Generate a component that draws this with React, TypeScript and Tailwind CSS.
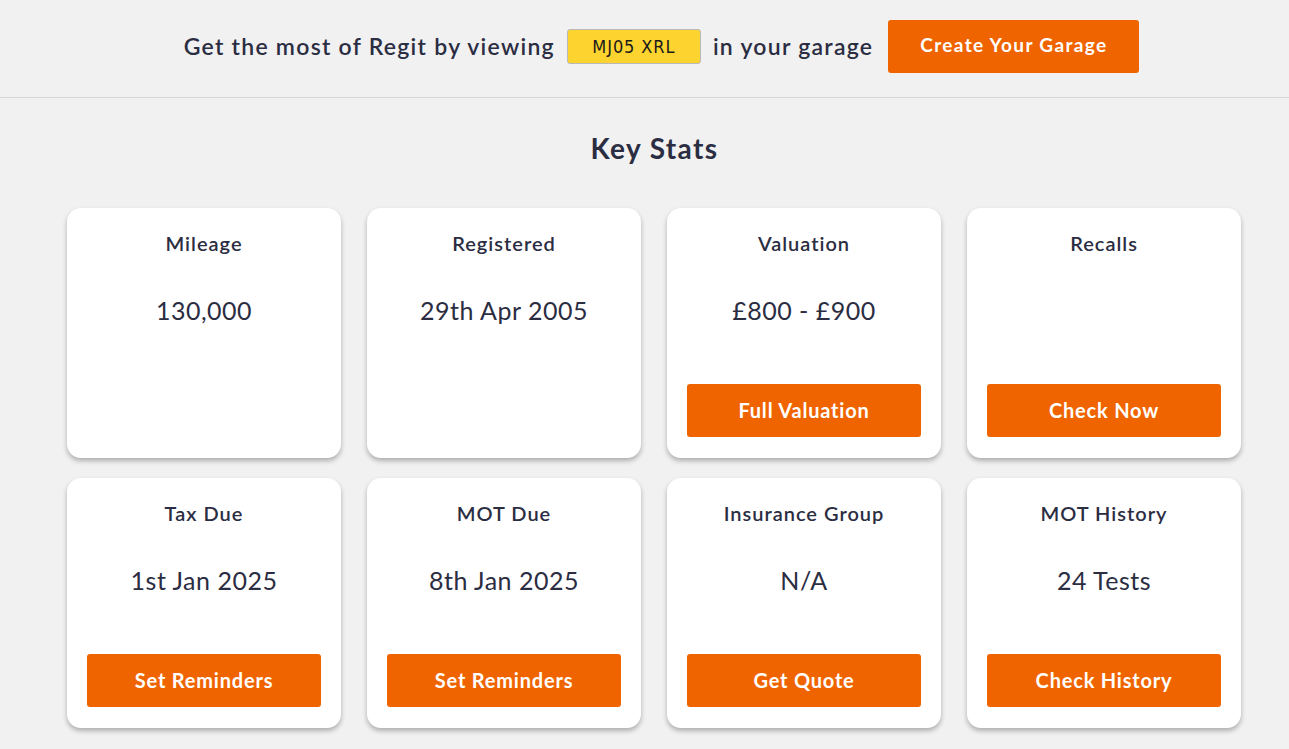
import React from 'react';

type Stat = {
  title: string;
  value?: string;
  action?: string;
};

const stats: Stat[] = [
  { title: 'Mileage', value: '130,000' },
  { title: 'Registered', value: '29th Apr 2005' },
  { title: 'Valuation', value: '£800 - £900', action: 'Full Valuation' },
  { title: 'Recalls', action: 'Check Now' },
  { title: 'Tax Due', value: '1st Jan 2025', action: 'Set Reminders' },
  { title: 'MOT Due', value: '8th Jan 2025', action: 'Set Reminders' },
  { title: 'Insurance Group', value: 'N/A', action: 'Get Quote' },
  { title: 'MOT History', value: '24 Tests', action: 'Check History' },
];

function StatCard({ stat }: { stat: Stat }) {
  return (
    <div className="h-[250px] bg-white rounded-[14px] shadow-[0_3px_5px_rgba(0,0,0,0.28)] flex flex-col items-center px-5 pt-[23px] pb-[21px]">
      <h3 className="text-[20px] leading-[24px] font-semibold tracking-[0.05em] text-[#2b2d42]">{stat.title}</h3>
      <p className="mt-[39px] h-[32px] text-[25px] leading-[32px] tracking-[0.02em] text-[#2b2d42]">{stat.value}</p>
      <div className="flex-1" />
      {stat.action && (
        <button className="w-full h-[53px] bg-[#f06400] rounded-[3px] text-white text-[20px] font-bold tracking-[0.04em] pb-[2px]">
          {stat.action}
        </button>
      )}
    </div>
  );
}

export default function App() {
  return (
    <div
      className="min-h-screen bg-[#f1f1f1] text-[#2b2d42]"
      style={{ fontFamily: 'Lato, "Noto Sans", sans-serif' }}
    >
      {/* Banner */}
      <div className="h-[98px] border-b border-[#d6d6d6] flex items-center justify-center pl-[34px] pb-[5px]">
        <span className="text-[23px] font-semibold tracking-[0.055em]">Get the most of Regit by viewing</span>
        <span
          className="ml-[12px] w-[134px] h-[35px] flex items-center justify-center bg-[#fdd42f] border border-[#b9b9b9] rounded-[3px] text-[18px] tracking-[0.05em] text-[#1a1a1a]"
          style={{ fontFamily: '"DejaVu Sans Condensed", "DejaVu Sans", sans-serif' }}
        >
          MJ05 XRL
        </span>
        <span className="ml-[12px] text-[23px] font-semibold tracking-[0.055em]">in your garage</span>
        <button className="ml-[15px] w-[251px] h-[53px] bg-[#f06400] rounded-[3px] text-white text-[19px] font-bold tracking-[0.07em] pb-[1px]">
          Create Your Garage
        </button>
      </div>

      {/* Key Stats */}
      <h2 className="mt-[29px] text-center text-[28px] leading-[42px] font-bold tracking-[0.05em] pl-[20px]">Key Stats</h2>

      <div className="mt-[39px] pl-[67px] pb-[20px]">
        <div className="w-[1174px] grid grid-cols-4 gap-x-[26px] gap-y-[20px]">
          {stats.map((s) => (
            <StatCard key={s.title} stat={s} />
          ))}
        </div>
      </div>
    </div>
  );
}
